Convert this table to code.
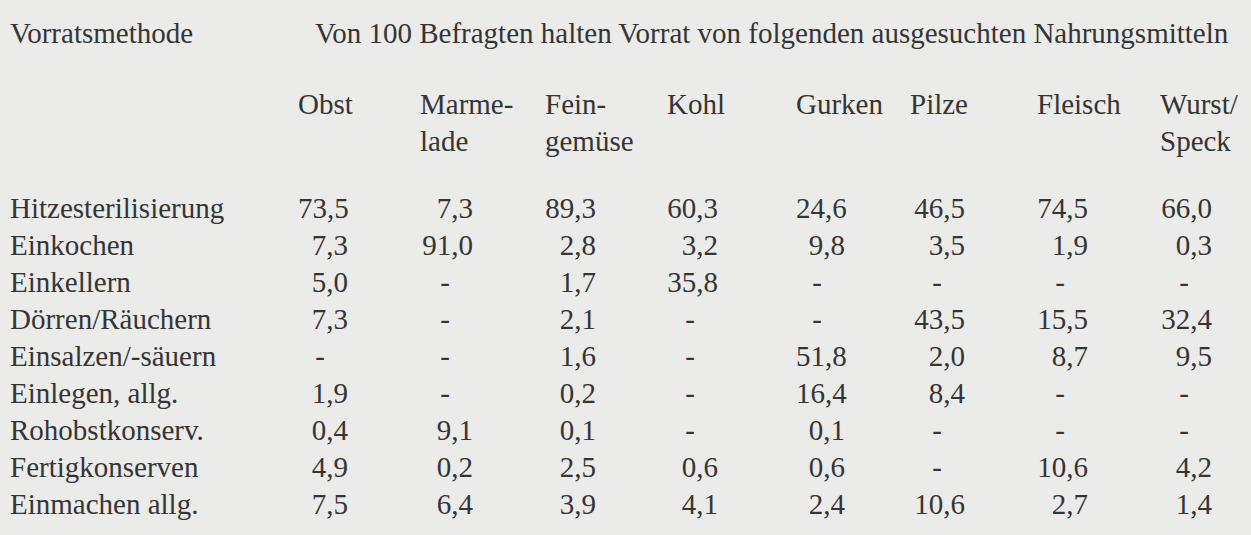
const COLS = 'grid grid-cols-[288px_122px_125px_122px_129px_114px_127px_123px_91px] font-[Liberation_Serif] text-[29px] leading-[37px] text-[#353535] whitespace-nowrap'
const TXT = 'font-[Liberation_Serif]'

const HEADERS: [string, string?][] = [
  ['Obst'],
  ['Marme-', 'lade'],
  ['Fein-', 'gemüse'],
  ['Kohl'],
  ['Gurken'],
  ['Pilze'],
  ['Fleisch'],
  ['Wurst/', 'Speck'],
]

// width of the right-aligned number box, measured from the header's left edge
const NUM_W = ['w-[50px]', 'w-[53px]', 'w-[51px]', 'w-[51px]', 'w-[49px]', 'w-[55px]', 'w-[51px]', 'w-[52px]']

const ROWS: [string, string[]][] = [
  ['Hitzesterilisierung', ['73,5', '7,3', '89,3', '60,3', '24,6', '46,5', '74,5', '66,0']],
  ['Einkochen', ['7,3', '91,0', '2,8', '3,2', '9,8', '3,5', '1,9', '0,3']],
  ['Einkellern', ['5,0', '-', '1,7', '35,8', '-', '-', '-', '-']],
  ['Dörren/Räuchern', ['7,3', '-', '2,1', '-', '-', '43,5', '15,5', '32,4']],
  ['Einsalzen/-säuern', ['-', '-', '1,6', '-', '51,8', '2,0', '8,7', '9,5']],
  ['Einlegen, allg.', ['1,9', '-', '0,2', '-', '16,4', '8,4', '-', '-']],
  ['Rohobstkonserv.', ['0,4', '9,1', '0,1', '-', '0,1', '-', '-', '-']],
  ['Fertigkonserven', ['4,9', '0,2', '2,5', '0,6', '0,6', '-', '10,6', '4,2']],
  ['Einmachen allg.', ['7,5', '6,4', '3,9', '4,1', '2,4', '10,6', '2,7', '1,4']],
]

export default function App() {
  return (
    <div className="min-h-screen bg-[#ebebe9] pl-[10px] pt-[15px]">
      {/* Title row */}
      <div className={COLS}>
        <div className={TXT}>Vorratsmethode</div>
        <div className={`${TXT} col-span-8 pl-[17px]`}>
          Von 100 Befragten halten Vorrat von folgenden ausgesuchten Nahrungsmitteln
        </div>
      </div>

      {/* Column headers */}
      <div className={`${COLS} mt-[34px]`}>
        <div />
        {HEADERS.map(([a, b]) => (
          <div key={a} className={TXT}>
            <div className={TXT}>{a}</div>
            {b && <div className={TXT}>{b}</div>}
          </div>
        ))}
      </div>

      {/* Data */}
      <div className={`${COLS} mt-[30px]`}>
        {ROWS.map(([label, values]) => (
          <div key={label} className="contents">
            <div className={TXT}>{label}</div>
            {values.map((v, i) => (
              <div key={i}>
                <div className={`${TXT} ${NUM_W[i]} text-right ${v === '-' ? 'pr-[23px]' : ''}`}>{v}</div>
              </div>
            ))}
          </div>
        ))}
      </div>
    </div>
  )
}
